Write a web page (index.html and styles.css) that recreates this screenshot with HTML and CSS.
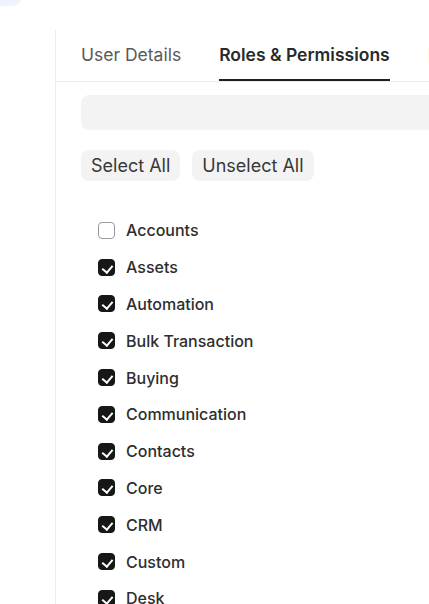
FILE: index.html
```html
<!DOCTYPE html>
<html>
<head>
<meta charset="utf-8">
<link rel="stylesheet" href="styles.css">
</head>
<body>
<div class="blob"></div>
<div class="page">
  <div class="sidebar"></div>
  <div class="main">
    <div class="tabs">
      <div class="tab">User Details</div>
      <div class="tab active">Roles &amp; Permissions</div>
      <div class="tab">Permissions</div>
    </div>
    <div class="content">
      <div class="search"></div>
      <div class="actions">
        <button class="btn">Select All</button>
        <button class="btn">Unselect All</button>
      </div>
      <ul class="list">
        <li><span class="cb"></span>Accounts</li>
        <li><span class="cb on"></span>Assets</li>
        <li><span class="cb on"></span>Automation</li>
        <li><span class="cb on"></span>Bulk Transaction</li>
        <li><span class="cb on"></span>Buying</li>
        <li><span class="cb on"></span>Communication</li>
        <li><span class="cb on"></span>Contacts</li>
        <li><span class="cb on"></span>Core</li>
        <li><span class="cb on"></span>CRM</li>
        <li><span class="cb on"></span>Custom</li>
        <li><span class="cb on"></span>Desk</li>
      </ul>
    </div>
  </div>
</div>
</body>
</html>
```

FILE: styles.css
```css
* { box-sizing: border-box; }
html, body { margin: 0; padding: 0; background: #fff; overflow: hidden; height: 604px; }
body { font-family: Inter, "Noto Sans", sans-serif; color: #383838; position: relative; }
.blob { position: absolute; left: -20px; top: -30px; width: 42px; height: 36px; border-radius: 10px; background: #eef4fd; }
.page { display: flex; padding-top: 30px; }
.sidebar { width: 56px; flex: none; border-right: 1px solid #ededed; height: 600px; }
.main { flex: 1; min-width: 0; }
.tabs { display: flex; gap: 38px; padding-left: 25px; border-bottom: 1px solid #ececec; height: 52px; white-space: nowrap; overflow: hidden; }
.tab { font-size: 17.5px; color: #5a5a5a; padding-top: 13px; line-height: 24px; }
.tab.active { color: #2a2a2a; font-weight: 600; border-bottom: 2px solid #1f1f1f; height: 51px; }
.content { padding: 13px 0 0 25px; }
.search { height: 35px; background: #f3f3f3; border-radius: 8px 0 0 8px; }
.actions { display: flex; gap: 12px; margin-top: 20px; }
.btn { font-family: inherit; font-size: 18px; color: #383838; background: #f3f3f3; border: 0; border-radius: 8px; height: 31px; padding: 0 10px; line-height: 31px; }
.list { list-style: none; margin: 31px 0 0; padding: 0 0 0 17px; }
.list li { display: flex; align-items: center; gap: 11px; height: 36.8px; font-size: 16px; font-weight: 500; color: #2e2e2e; white-space: nowrap; }
.cb { width: 17px; height: 17px; border: 1px solid #9a9a9a; border-radius: 4px; flex: none; position: relative; background: #fff; }
.cb.on { background: #171717; border-color: #171717; }
.cb.on::after { content: ""; position: absolute; left: 4.5px; top: 3px; width: 5px; height: 8px; border: solid #fff; border-width: 0 2px 2px 0; transform: rotate(40deg); }
```
